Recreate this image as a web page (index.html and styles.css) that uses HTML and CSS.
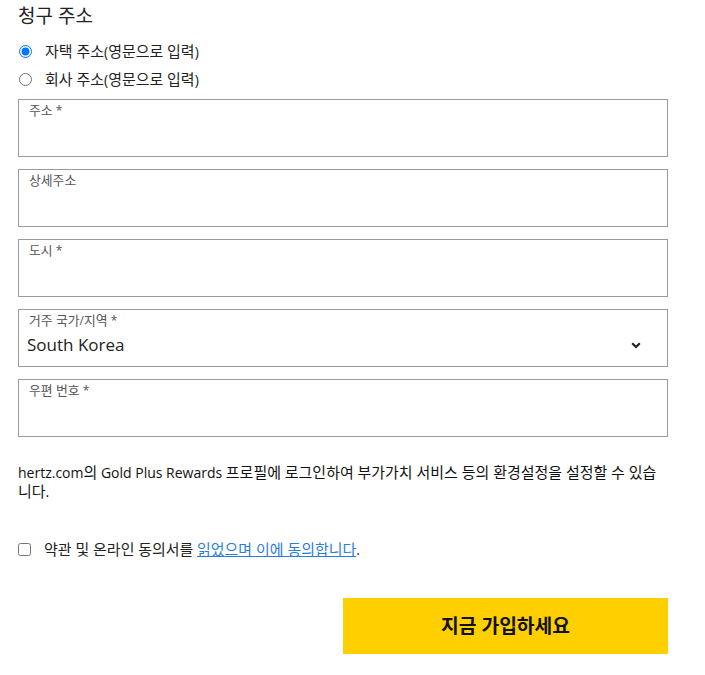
FILE: index.html
```html
<!DOCTYPE html>
<html lang="ko">
<head>
<meta charset="utf-8">
<link rel="stylesheet" href="styles.css">
</head>
<body>
<div class="page">
  <h2 class="title">청구 주소</h2>
  <div class="radios">
    <label class="radio-row"><input type="radio" name="addr" checked><span><span class="ko">자택 주소</span>(<span class="ko">영문으로 입력</span>)</span></label>
    <label class="radio-row"><input type="radio" name="addr"><span><span class="ko">회사 주소</span>(<span class="ko">영문으로 입력</span>)</span></label>
  </div>
  <div class="fields">
    <div class="field"><span class="field-label"><span class="ko">주소</span> *</span></div>
    <div class="field"><span class="field-label"><span class="ko">상세주소</span></span></div>
    <div class="field"><span class="field-label"><span class="ko">도시</span> *</span></div>
    <div class="field select">
      <span class="field-label"><span class="ko">거주 국가</span>/<span class="ko">지역</span> *</span>
      <div class="select-row">
        <span class="value">South Korea</span>
        <svg class="chev" width="10" height="7" viewBox="0 0 10 7"><path d="M1.2 1.3 L5 5 L8.8 1.3" fill="none" stroke="#222" stroke-width="2.2"/></svg>
      </div>
    </div>
    <div class="field"><span class="field-label"><span class="ko">우편 번호</span> *</span></div>
  </div>
  <p class="info">hertz.com<span class="ko">의</span> Gold Plus Rewards <span class="ko">프로필에 로그인하여 부가가치 서비스 등의 환경설정을 설정할 수 있습니다</span>.</p>
  <label class="agree"><input type="checkbox"><span><span class="ko">약관 및 온라인 동의서를</span> <a href="#"><span class="ko">읽었으며 이에 동의합니다</span></a>.</span></label>
  <div class="actions">
    <button class="submit" type="button"><span class="ko">지금 가입하세요</span></button>
  </div>
</div>
</body>
</html>
```

FILE: styles.css
```css
* { box-sizing: border-box; }
body {
  margin: 0;
  background: #fff;
  font-family: "Open Sans", "Noto Sans CJK KR", sans-serif;
  color: #111;
}
.ko {
  font-size: 1.07em;
}
.page {
  width: 668px;
  padding-left: 18px;
}
.title {
  margin: 0 0 5px;
  font-size: 19px;
  font-weight: 400;
  line-height: 32px;
  color: #222;
}
.title .ko { font-size: 1em; }
.radios {
  display: flex;
  flex-direction: column;
  margin-bottom: 6px;
}
.radio-row {
  display: flex;
  align-items: center;
  height: 28px;
  font-size: 14px;
  line-height: 20px;
  color: #222;
}
.radio-row input {
  margin: 0 13px 0 1px;
  width: 13px;
  height: 13px;
}
.fields {
  display: flex;
  flex-direction: column;
  gap: 12px;
}
.field {
  height: 58px;
  border: 1px solid #9b9b9b;
  padding: 2px 10px 0 10px;
  display: flex;
  flex-direction: column;
}
.field-label {
  font-size: 12px;
  line-height: 16px;
  color: #555;
}
.select {
  padding-left: 8px;
}
.select .field-label {
  padding-left: 2px;
}
.select-row {
  display: flex;
  align-items: center;
  justify-content: space-between;
  margin-top: 5px;
  padding-right: 16px;
}
.value {
  font-size: 17px;
  line-height: 22px;
  color: #222;
}
.chev { display: block; margin-top: 1px; }
.info {
  margin: 26px 0 0;
  font-size: 14px;
  line-height: 18px;
  color: #111;
}
.agree {
  display: flex;
  align-items: center;
  height: 20px;
  margin-top: 38px;
  font-size: 14px;
  line-height: 20px;
  color: #222;
}
.agree input {
  margin: 0 13px 0 0;
  width: 13px;
  height: 13px;
}
.agree a {
  color: #2a7de1;
  text-decoration: underline;
}
.actions {
  display: flex;
  justify-content: flex-end;
  margin-top: 39px;
}
.submit {
  width: 325px;
  height: 56px;
  border: 0;
  background: #ffcf00;
  font-family: "Open Sans", "Noto Sans CJK KR", sans-serif;
  font-size: 18px;
  line-height: 24px;
  font-weight: 700;
  color: #111;
  cursor: pointer;
}
```
